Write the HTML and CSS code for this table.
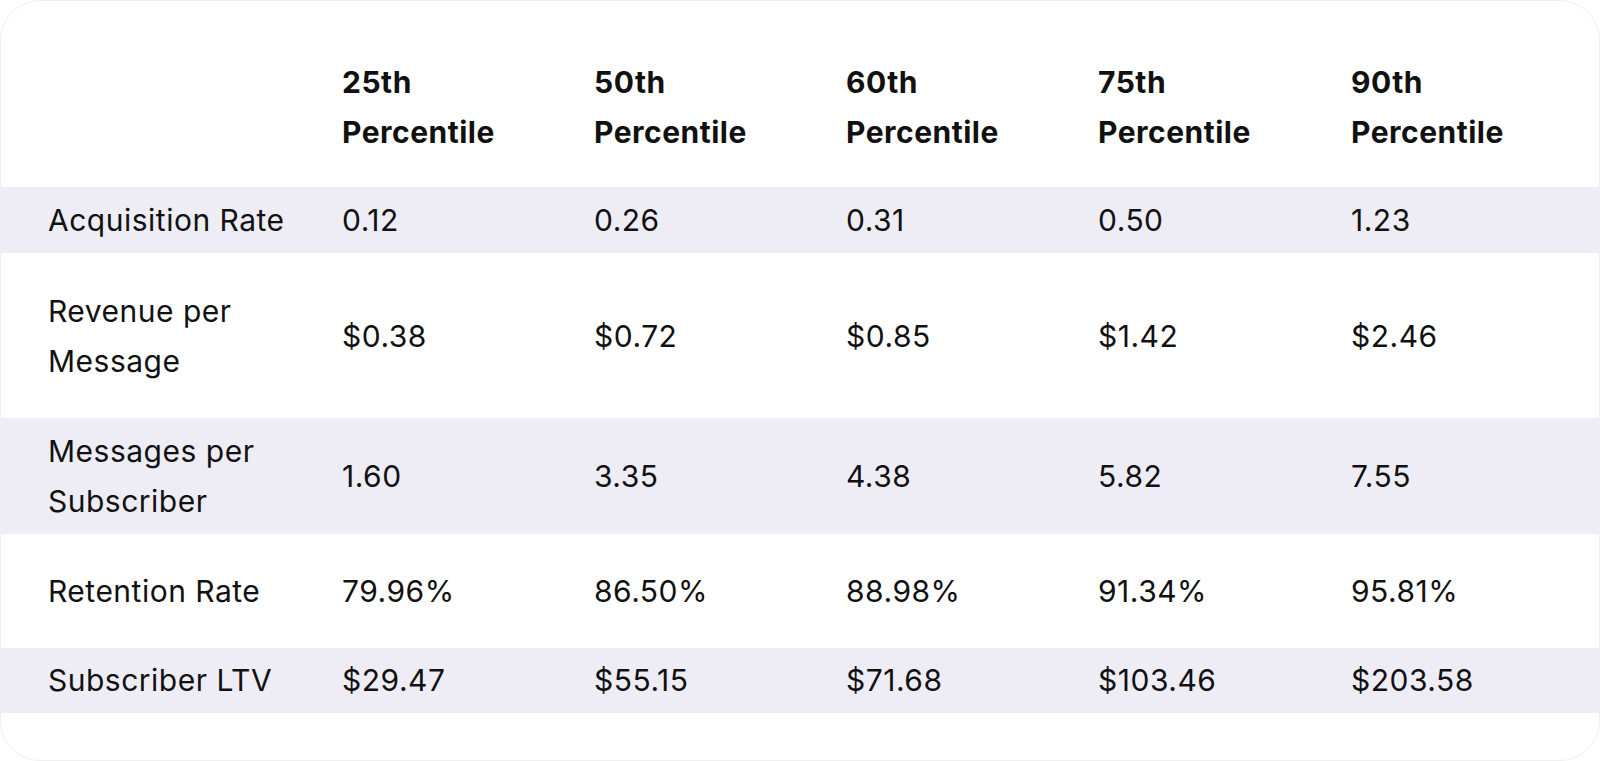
FILE: index.html
```html
<!DOCTYPE html>
<html lang="en">
<head>
<meta charset="utf-8">
<title>Percentile benchmarks</title>
<link rel="stylesheet" href="styles.css">
</head>
<body>
<div class="card">
  <div class="row head">
    <div class="cell label"></div>
    <div class="cell">25th<br>Percentile</div>
    <div class="cell">50th<br>Percentile</div>
    <div class="cell">60th<br>Percentile</div>
    <div class="cell">75th<br>Percentile</div>
    <div class="cell">90th<br>Percentile</div>
  </div>
  <div class="row striped">
    <div class="cell label">Acquisition Rate</div>
    <div class="cell">0.12</div>
    <div class="cell">0.26</div>
    <div class="cell">0.31</div>
    <div class="cell">0.50</div>
    <div class="cell">1.23</div>
  </div>
  <div class="row plain tall">
    <div class="cell label">Revenue per<br>Message</div>
    <div class="cell">$0.38</div>
    <div class="cell">$0.72</div>
    <div class="cell">$0.85</div>
    <div class="cell">$1.42</div>
    <div class="cell">$2.46</div>
  </div>
  <div class="row striped">
    <div class="cell label">Messages per<br>Subscriber</div>
    <div class="cell">1.60</div>
    <div class="cell">3.35</div>
    <div class="cell">4.38</div>
    <div class="cell">5.82</div>
    <div class="cell">7.55</div>
  </div>
  <div class="row plain">
    <div class="cell label">Retention Rate</div>
    <div class="cell">79.96%</div>
    <div class="cell">86.50%</div>
    <div class="cell">88.98%</div>
    <div class="cell">91.34%</div>
    <div class="cell">95.81%</div>
  </div>
  <div class="row striped last">
    <div class="cell label">Subscriber LTV</div>
    <div class="cell">$29.47</div>
    <div class="cell">$55.15</div>
    <div class="cell">$71.68</div>
    <div class="cell">$103.46</div>
    <div class="cell">$203.58</div>
  </div>
</div>
</body>
</html>
```
FILE: styles.css
```css
* { box-sizing: border-box; }
html, body { margin: 0; padding: 0; background: #ffffff; }
body {
  font-family: Inter, "Noto Sans", "Liberation Sans", sans-serif;
  color: #111111;
}
.card {
  width: 1600px;
  height: 761px;
  border: 1px solid #efefef;
  border-radius: 40px;
  overflow: hidden;
  background: #ffffff;
  display: flex;
  flex-direction: column;
}
.row {
  display: grid;
  grid-template-columns: 342px 252px 252px 252px 253px 1fr;
  align-items: center;
  font-size: 30px;
  letter-spacing: 0.5px;
  line-height: 50px;
  margin: 0 -1px;
}
.cell { white-space: nowrap; }
.label { padding-left: 48px; }
.head {
  font-weight: 700;
  align-items: start;
  padding: 56px 0 30px;
}
.striped {
  background: #eeedf6;
  padding: 8px 0;
}
.plain { padding: 32px 0; }
.plain.tall { padding: 33px 0 32px; }
.striped.last { padding: 7px 0 8px; }
```
